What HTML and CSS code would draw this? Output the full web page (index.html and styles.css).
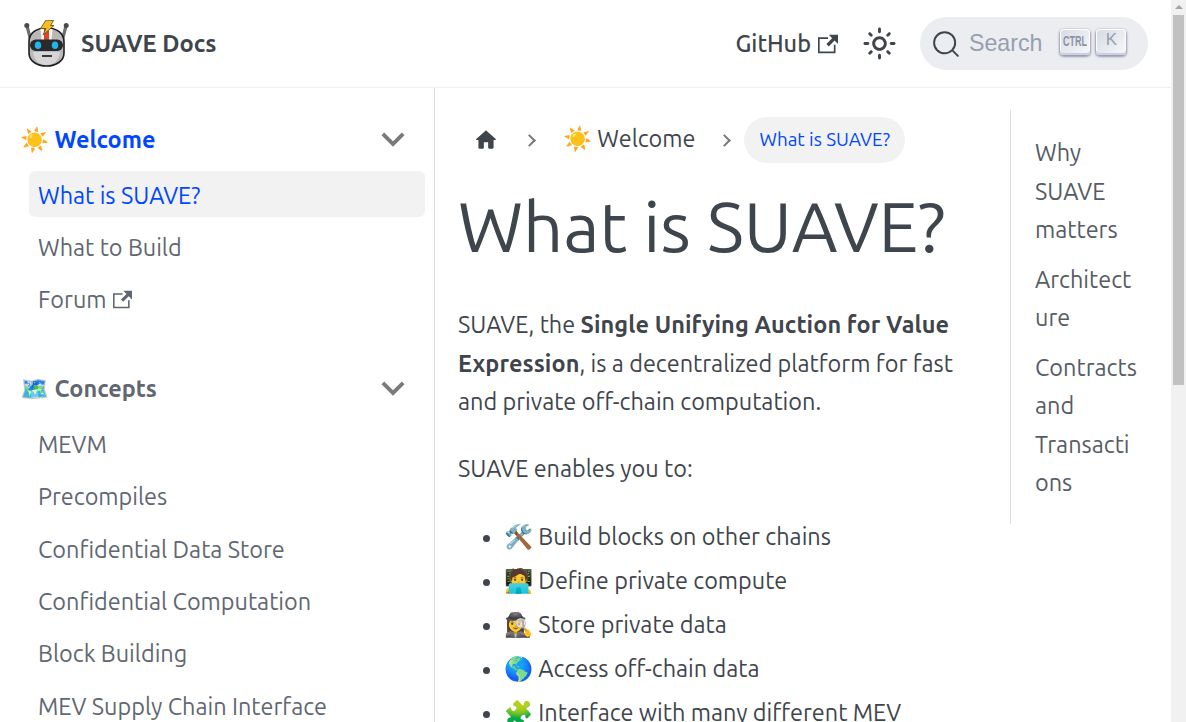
FILE: index.html
```html
<!DOCTYPE html>
<html lang="en">
<head>
<meta charset="utf-8">
<title>What is SUAVE? | SUAVE Docs</title>
<link rel="stylesheet" href="styles.css">
</head>
<body>
<div class="viewport">
<nav class="navbar">
  <a class="brand">
    <svg class="logo" viewBox="0 0 46 47" width="46" height="47" aria-hidden="true">
      <path d="M3 6 L7.500 23 M42 6 L37.500 23" stroke="#6e6e6e" stroke-width="3.200" fill="none"/>
      <circle cx="2.800" cy="5.500" r="2.500" fill="#4a4a4a"/><circle cx="42.200" cy="5.500" r="2.500" fill="#4a4a4a"/>
      <path d="M5 22 C5 13 12 8 22.500 8 C33 8 40 13 40 22 L40 33 C40 41 32 46 22.500 46 C13 46 5 41 5 33 Z" fill="#b9b9b9" stroke="#1e1e1e" stroke-width="1.600"/>
      <path d="M9 32 C10 41 16 45 22.500 45 C29 45 35 41 36 32 Z" fill="#d6d6d6"/>
      <path d="M16.500 9 L28.500 9 L27.500 20 L17.500 20 Z" fill="#f6f6f6"/>
      <rect x="20" y="9" width="5" height="11" fill="#d8452c"/>
      <rect x="6" y="19.500" width="33" height="11.500" rx="5.700" fill="#2a2a2a"/>
      <ellipse cx="14" cy="25.200" rx="3.200" ry="3.800" fill="#21b5ee"/><ellipse cx="31" cy="25.200" rx="3.200" ry="3.800" fill="#21b5ee"/>
      <rect x="18" y="35" width="10" height="2" fill="#3a3a3a"/>
      <path d="M22 0 L29.500 .5 L26.500 5.500 L30 5.500 L19 15 L22 8.500 L16.500 8.500 Z" fill="#f7bd26" stroke="#6b5314" stroke-width=".9" stroke-linejoin="round"/>
    </svg>
    <b class="brand-text">SUAVE Docs</b>
  </a>
  <div class="nav-right">
    <a class="gh">GitHub <svg class="ext ext-nav" viewBox="0 0 24 24" aria-hidden="true"><path fill="currentColor" d="M21 13v10h-21v-19h12v2h-10v15h17v-8h2zm3-12h-10.988l4.035 4-6.977 7.070 2.828 2.828 6.977-7.070 4.125 4.172v-11z"/></svg></a>
    <svg class="sun" viewBox="0 0 24 24" aria-hidden="true"><path fill="#3f454c" d="M12,9c1.650,0,3,1.350,3,3s-1.350,3-3,3s-3-1.350-3-3S10.350,9,12,9 M12,7c-2.760,0-5,2.240-5,5s2.240,5,5,5s5-2.240,5-5S14.760,7,12,7L12,7z M2,13l2,0c0.550,0,1-0.450,1-1s-0.450-1-1-1l-2,0c-0.550,0-1,0.450-1,1S1.450,13,2,13z M20,13l2,0c0.550,0,1-0.450,1-1s-0.450-1-1-1l-2,0c-0.550,0-1,0.450-1,1S19.450,13,20,13z M11,2v2c0,0.550,0.450,1,1,1s1-0.450,1-1V2c0-0.550-0.450-1-1-1S11,1.450,11,2z M11,20v2c0,0.550,0.450,1,1,1s1-0.450,1-1v-2c0-0.550-0.450-1-1-1C11.450,19,11,19.450,11,20z M5.990,4.580c-0.390-0.390-1.030-0.390-1.410,0c-0.390,0.390-0.390,1.030,0,1.410l1.060,1.060c0.390,0.390,1.030,0.390,1.410,0s0.390-1.030,0-1.410L5.990,4.580z M18.360,16.950c-0.390-0.390-1.030-0.390-1.410,0c-0.390,0.390-0.390,1.030,0,1.410l1.060,1.060c0.390,0.390,1.030,0.390,1.410,0c0.390-0.390,0.390-1.030,0-1.410L18.360,16.950z M19.420,5.990c0.390-0.390,0.390-1.030,0-1.410c-0.390-0.390-1.030-0.390-1.410,0l-1.060,1.060c-0.390,0.390-0.390,1.030,0,1.410s1.030,0.390,1.410,0L19.420,5.990z M7.050,18.360c0.390-0.390,0.390-1.030,0-1.410c-0.390-0.390-1.030-0.390-1.410,0l-1.060,1.060c-0.390,0.390-0.390,1.030,0,1.410s1.030,0.390,1.410,0L7.050,18.360z"/></svg>
    <div class="search">
      <svg class="mag" viewBox="0 0 20 20" aria-hidden="true"><path d="M14.386 14.386l4.088 4.088-4.088-4.088A7.533 7.533 0 1 1 3.733 3.733a7.533 7.533 0 0 1 10.653 10.653z" stroke="#3f454c" fill="none" fill-rule="evenodd" stroke-linecap="round" stroke-linejoin="round" stroke-width="1.400"/></svg>
      <span class="ph">Search</span>
      <span class="keys"><kbd class="key ctrl"><span class="ctrl-text">CTRL</span></kbd><kbd class="key">K</kbd></span>
    </div>
  </div>
</nav>
<div class="page">
  <aside class="sidebar">
    <div class="cat active"><span>☀️ Welcome</span><svg class="chev" viewBox="0 0 24 24"><path d="M7.410 8.590L12 13.170l4.590-4.580L18 10l-6 6-6-6 1.410-1.410z" fill="#7a7a7a"/></svg></div>
    <ul class="menu">
      <li class="cur">What is SUAVE?</li>
      <li>What to Build</li>
      <li>Forum <svg class="ext" viewBox="0 0 24 24" aria-hidden="true"><path fill="currentColor" d="M21 13v10h-21v-19h12v2h-10v15h17v-8h2zm3-12h-10.988l4.035 4-6.977 7.070 2.828 2.828 6.977-7.070 4.125 4.172v-11z"/></svg></li>
    </ul>
    <div class="cat second"><span>🗺️ Concepts</span><svg class="chev" viewBox="0 0 24 24"><path d="M7.410 8.590L12 13.170l4.590-4.580L18 10l-6 6-6-6 1.410-1.410z" fill="#7a7a7a"/></svg></div>
    <ul class="menu">
      <li>MEVM</li>
      <li>Precompiles</li>
      <li>Confidential Data Store</li>
      <li>Confidential Computation</li>
      <li>Block Building</li>
      <li>MEV Supply Chain Interface</li>
    </ul>
  </aside>
  <main class="doc">
    <article class="content">
      <nav class="crumbs">
        <svg class="home" viewBox="0 0 24 24" aria-hidden="true"><path d="M10 19v-5h4v5c0 .550.450 1 1 1h3c.550 0 1-.450 1-1v-7h1.700c.460 0 .680-.570.330-.870L12.670 3.600c-.380-.340-.960-.340-1.340 0l-8.360 7.530c-.340.300-.130.870.330.870H5v7c0 .550.450 1 1 1h3c.550 0 1-.450 1-1z" fill="#3f454c"/></svg>
        <span class="sep"></span>
        <span class="crumb">☀️ Welcome</span>
        <span class="sep sep2"></span>
        <span class="pill">What is SUAVE?</span>
      </nav>
      <h1>What is SUAVE?</h1>
      <p>SUAVE, the <b>Single Unifying Auction for Value Expression</b>, is a decentralized platform for fast and private off-chain computation.</p>
      <p>SUAVE enables you to:</p>
      <ul class="list">
        <li>🛠️ Build blocks on other chains</li>
        <li>🧑‍💻 Define private compute</li>
        <li>🕵️‍♀️ Store private data</li>
        <li>🌎 Access off-chain data</li>
        <li>🧩 Interface with many different MEV</li>
      </ul>
    </article>
    <aside class="toc">
      <a>Why SUAVE matters</a>
      <a>Architecture</a>
      <a>Contracts and Transactions</a>
    </aside>
  </main>
</div>
</div>
<div class="scrollbar" aria-hidden="true">
  <span class="arrow"></span>
  <div class="thumb"></div>
</div>
</body>
</html>
```
FILE: styles.css
```css
* { box-sizing: border-box; }
html, body { margin: 0; padding: 0; }
body {
  font-family: Ubuntu, "Noto Sans", "Open Sans", sans-serif;
  font-size: 23.45px;
  line-height: 38.28px;
  color: #3f454c;
  background: #fff;
  display: flex;
  height: 100vh;
  overflow: hidden;
}
.viewport { flex: 1; min-width: 0; height: 100vh; overflow: hidden; }
.scrollbar { width: 15px; flex: none; height: 100vh; background: #f1f1f1; display: flex; flex-direction: column; align-items: center; }
.arrow { width: 0; height: 0; margin-top: 5px; border-left: 4px solid transparent; border-right: 4px solid transparent; border-bottom: 4px solid #a3a3a3; }
.thumb { width: 11px; height: 370px; margin-top: 6px; background: #c1c1c1; }
.navbar {
  height: 88px;
  display: flex;
  align-items: center;
  justify-content: space-between;
  padding: 0 23px 0 24px;
  border-bottom: 1px solid #f0f0f2;
  background: #fff;
}
.brand { display: flex; align-items: center; gap: 11px; }
.brand-text { font-size: 23.7px; }
.logo { display: block; }
.nav-right { display: flex; align-items: center; }
.gh { font-weight: 500; display: flex; align-items: center; gap: 7px; }
.ext { width: 19px; height: 19px; vertical-align: -1px; margin-left: 1px; }
.ext-nav { width: 20px; height: 20px; margin-left: 0; }
.sun { width: 35px; height: 35px; margin-left: 24px; display: block; }
.search {
  margin-left: 23px;
  width: 228px;
  height: 53px;
  border-radius: 27px;
  background: #ebedf0;
  display: flex;
  align-items: center;
  padding-left: 12px;
}
.mag { width: 28px; height: 28px; display: block; }
.ph { margin-left: 9px; color: #969faf; font-family: "Liberation Sans", sans-serif; font-size: 23.2px; }
.keys { display: flex; gap: 6px; margin-left: 18px; align-self: flex-start; margin-top: 12px; }
.key {
  width: 30px;
  height: 26px;
  border-radius: 4px;
  background: linear-gradient(-225deg, #d5dbe4, #f8f8f8);
  box-shadow: inset 0 -2px 0 0 #cdcde6, inset 0 0 1px 1px #fff, 0 1px 2px 1px rgba(30, 35, 90, .4);
  color: #969faf;
  font-family: "Liberation Sans", sans-serif;
  font-size: 17px;
  line-height: 21px;
  text-align: center;
  display: block;
}
.ctrl { display: flex; justify-content: center; align-items: center; padding-bottom: 2px; }
.ctrl-text { flex: none; font-size: 15px; line-height: 18px; font-weight: 700; transform: scaleX(.6); color: #8a93a5; }
.page { display: flex; }
.sidebar {
  width: 435px;
  flex: none;
  border-right: 1px solid #dadde1;
  padding: 28px 9px 0 12px;
  height: 634px;
  overflow: hidden;
  color: #606770;
}
.cat {
  display: flex;
  align-items: center;
  justify-content: space-between;
  height: 46px;
  padding: 0 9px 0 8px;
  font-weight: 700;
  color: #606770;
}
.cat.active { color: #0047ff; }
.second { margin-top: 44px; }
.chev { width: 46px; height: 46px; display: block; }
.menu { list-style: none; margin: 8.5px 0 0 17px; padding: 0; }
.menu li { height: 46px; line-height: 48.5px; padding: 0 9px; border-radius: 6px; margin-bottom: 6.4px; }
.menu li.cur { background: #f2f2f2; color: #0047ff; }
.doc { flex: 1; display: flex; align-items: flex-start; padding: 22px 0 0 23px; min-width: 0; }
.content { width: 505px; flex: none; }
.crumbs { display: flex; align-items: center; height: 46px; margin-top: 7px; }
.home { width: 26px; height: 26px; margin-left: 15px; }
.sep { width: 9px; height: 9px; flex: none; border-top: 2px solid #777; border-right: 2px solid #777; transform: rotate(45deg); margin: 0 29px 0 26px; }
.sep2 { margin: 0 15px 0 25px; }
.crumb { white-space: nowrap; margin-bottom: 3px; }
.pill { background: #f2f2f2; color: #0047ff; font-size: 18.85px; padding: 0 15px; border-radius: 23px; height: 46px; line-height: 44px; white-space: nowrap; }
h1 { font-size: 70.4px; line-height: 87px; font-weight: 400; margin: 19px 0 36.4px; white-space: nowrap; }
p { margin: 0 0 29px; }
p b { letter-spacing: .09px; }
.list { margin: 0; padding-left: 46px; }
.list li { margin-bottom: 5.75px; white-space: nowrap; }
.toc {
  margin-left: 47px;
  width: 129px;
  flex: none;
  border-left: 1px solid #dadde1;
  padding: 23px 0 22px 24px;
  line-height: 38.5px;
  display: flex;
  flex-direction: column;
  gap: 11.1px;
  color: #565c64;
}
.toc a { display: block; overflow-wrap: anywhere; }
```
